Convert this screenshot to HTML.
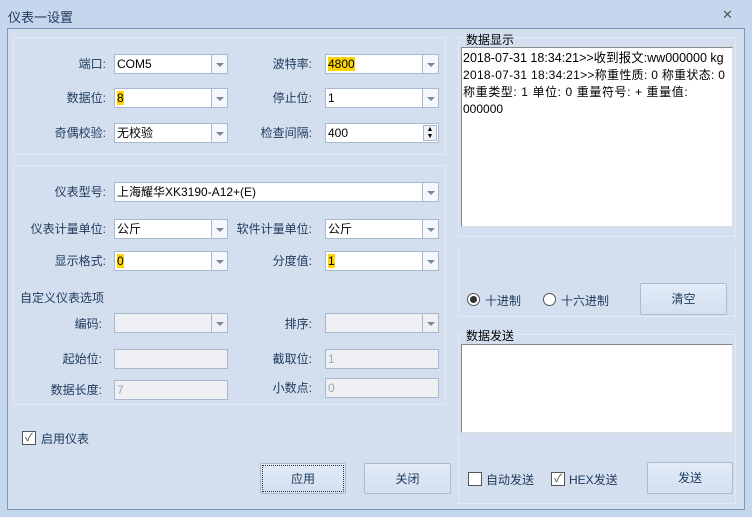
<!DOCTYPE html>
<html><head><meta charset="utf-8"><style>
*{box-sizing:border-box;margin:0;padding:0}
body{width:752px;height:517px;background:#c6d7ed;font-family:"Liberation Sans","Noto Sans CJK SC",sans-serif;font-size:12px;color:#1e395b;position:relative;overflow:hidden}
.a{position:absolute}
.title{left:8px;top:7px;font-size:13px;color:#1e395b}
.frame{left:7px;top:28px;width:738px;height:482px;border:1px solid #7e96b8;background:#d3dfef}
.grp{border:1px solid #e2e9f3}
.lbl{text-align:right;width:100px;line-height:20px;height:20px}
.cb{background:#fff;border:1px solid #a8b8cf;height:20px;line-height:18px;padding-left:2px;color:#000}
.cb .dd{position:absolute;right:0;top:0;width:16px;height:18px;border-left:1px solid #a8b8cf;background:#f4f7fb}
.cb .dd:after{content:"";position:absolute;left:4px;top:8px;border-left:4px solid transparent;border-right:4px solid transparent;border-top:4px solid #7b8899}
.dis{background:#eef0f3;color:#9aa}
.hl{background:#ffd400}
.btn{border:1px solid #a9bbd3;border-radius:2px;background:linear-gradient(#e2ebf7,#d3e0f1);text-align:center;line-height:30px;font-size:12px;color:#1e395b}
.chk{width:14px;height:14px;border:1px solid #555;background:#fff;font-size:11px;line-height:12px;text-align:center;color:#444}
.rad{width:13px;height:13px;border:1px solid #555;border-radius:50%;background:#fff}
</style></head><body>
<div class="a title">仪表一设置</div>
<div class="a" style="left:722px;top:7px;font-size:13px;color:#555">✕</div>
<div class="a frame"></div>
<div class="a grp" style="left:13px;top:37px;width:433px;height:118px"></div>
<div class="a grp" style="left:13px;top:165px;width:433px;height:240px"></div>
<div class="a grp" style="left:458px;top:37px;width:278px;height:200px"></div>
<div class="a grp" style="left:458px;top:245px;width:278px;height:72px;border-top-color:transparent"></div>
<div class="a grp" style="left:458px;top:334px;width:278px;height:170px"></div>

<div class="a lbl" style="left:6px;top:54px">端口:</div>
<div class="a cb" style="left:114px;top:54px;width:114px">COM5<span class="dd"></span></div>
<div class="a lbl" style="left:212px;top:54px">波特率:</div>
<div class="a cb" style="left:325px;top:54px;width:114px"><span class="hl">4800</span><span class="dd"></span></div>

<div class="a lbl" style="left:6px;top:88px">数据位:</div>
<div class="a cb" style="left:114px;top:88px;width:114px"><span class="hl">8</span><span class="dd"></span></div>
<div class="a lbl" style="left:212px;top:88px">停止位:</div>
<div class="a cb" style="left:325px;top:88px;width:114px">1<span class="dd"></span></div>

<div class="a lbl" style="left:6px;top:123px">奇偶校验:</div>
<div class="a cb" style="left:114px;top:123px;width:114px">无校验<span class="dd"></span></div>
<div class="a lbl" style="left:212px;top:123px">检查间隔:</div>
<div class="a cb" style="left:325px;top:123px;width:114px">400<span style="position:absolute;right:1px;top:1px;width:14px;height:16px;border:1px solid #a8b8cf;background:#eef2f7;font-size:7px;line-height:7px;text-align:center">▲<br>▼</span></div>

<div class="a lbl" style="left:6px;top:182px">仪表型号:</div>
<div class="a cb" style="left:114px;top:182px;width:325px">上海耀华XK3190-A12+(E)<span class="dd"></span></div>

<div class="a lbl" style="left:6px;top:219px">仪表计量单位:</div>
<div class="a cb" style="left:114px;top:219px;width:114px">公斤<span class="dd"></span></div>
<div class="a lbl" style="left:212px;top:219px">软件计量单位:</div>
<div class="a cb" style="left:325px;top:219px;width:114px">公斤<span class="dd"></span></div>

<div class="a lbl" style="left:6px;top:251px">显示格式:</div>
<div class="a cb" style="left:114px;top:251px;width:114px"><span class="hl">0</span><span class="dd"></span></div>
<div class="a lbl" style="left:212px;top:251px">分度值:</div>
<div class="a cb" style="left:325px;top:251px;width:114px"><span class="hl">1</span><span class="dd"></span></div>

<div class="a" style="left:20px;top:289px">自定义仪表选项</div>
<div class="a lbl" style="left:2px;top:314px">编码:</div>
<div class="a cb dis" style="left:114px;top:313px;width:114px"><span class="dd" style="background:#eef0f3"></span></div>
<div class="a lbl" style="left:212px;top:314px">排序:</div>
<div class="a cb dis" style="left:325px;top:313px;width:114px"><span class="dd" style="background:#eef0f3"></span></div>
<div class="a lbl" style="left:2px;top:349px">起始位:</div>
<div class="a cb dis" style="left:114px;top:349px;width:114px"></div>
<div class="a lbl" style="left:212px;top:349px">截取位:</div>
<div class="a cb dis" style="left:325px;top:349px;width:114px">1</div>
<div class="a lbl" style="left:2px;top:380px">数据长度:</div>
<div class="a cb dis" style="left:114px;top:380px;width:114px">7</div>
<div class="a lbl" style="left:212px;top:378px">小数点:</div>
<div class="a cb dis" style="left:325px;top:378px;width:114px">0</div>

<div class="a chk" style="left:22px;top:431px">✓</div>
<div class="a" style="left:41px;top:430px">启用仪表</div>

<div class="a btn" style="left:260px;top:463px;width:86px;height:31px;outline:1px dotted #333;outline-offset:-3px">应用</div>
<div class="a btn" style="left:364px;top:463px;width:87px;height:31px">关闭</div>

<div class="a" style="left:466px;top:31px;color:#000">数据显示</div>
<div class="a" style="left:461px;top:47px;width:272px;height:180px;background:#fff;border:1px solid #888;border-right-color:#ddd;border-bottom-color:#ddd;color:#000;line-height:17px;padding:2px 1px;white-space:nowrap;overflow:hidden"><span style="font-size:12.5px">2018-07-31 18:34:21&gt;&gt;收到报文:ww000000 kg</span><br><span style="font-size:12px;letter-spacing:0.3px">2018-07-31 18:34:21&gt;&gt;称重性质: 0 称重状态: 0</span><br><span style="font-size:12px;letter-spacing:0.6px">称重类型: 1 单位: 0 重量符号: + 重量值:</span><br>000000</div>

<div class="a rad" style="left:467px;top:293px"><div style="margin:2px;width:7px;height:7px;border-radius:50%;background:#333"></div></div>
<div class="a" style="left:485px;top:292px">十进制</div>
<div class="a rad" style="left:543px;top:293px"></div>
<div class="a" style="left:561px;top:292px">十六进制</div>
<div class="a btn" style="left:640px;top:283px;width:87px;height:32px">清空</div>

<div class="a" style="left:466px;top:327px;color:#000">数据发送</div>
<div class="a" style="left:461px;top:344px;width:272px;height:89px;background:#fff;border:1px solid #888;border-right-color:#ddd;border-bottom-color:#ddd"></div>

<div class="a chk" style="left:468px;top:472px"></div>
<div class="a" style="left:486px;top:471px">自动发送</div>
<div class="a chk" style="left:551px;top:472px">✓</div>
<div class="a" style="left:569px;top:471px">HEX发送</div>
<div class="a btn" style="left:647px;top:462px;width:86px;height:32px">发送</div>
</body></html>
